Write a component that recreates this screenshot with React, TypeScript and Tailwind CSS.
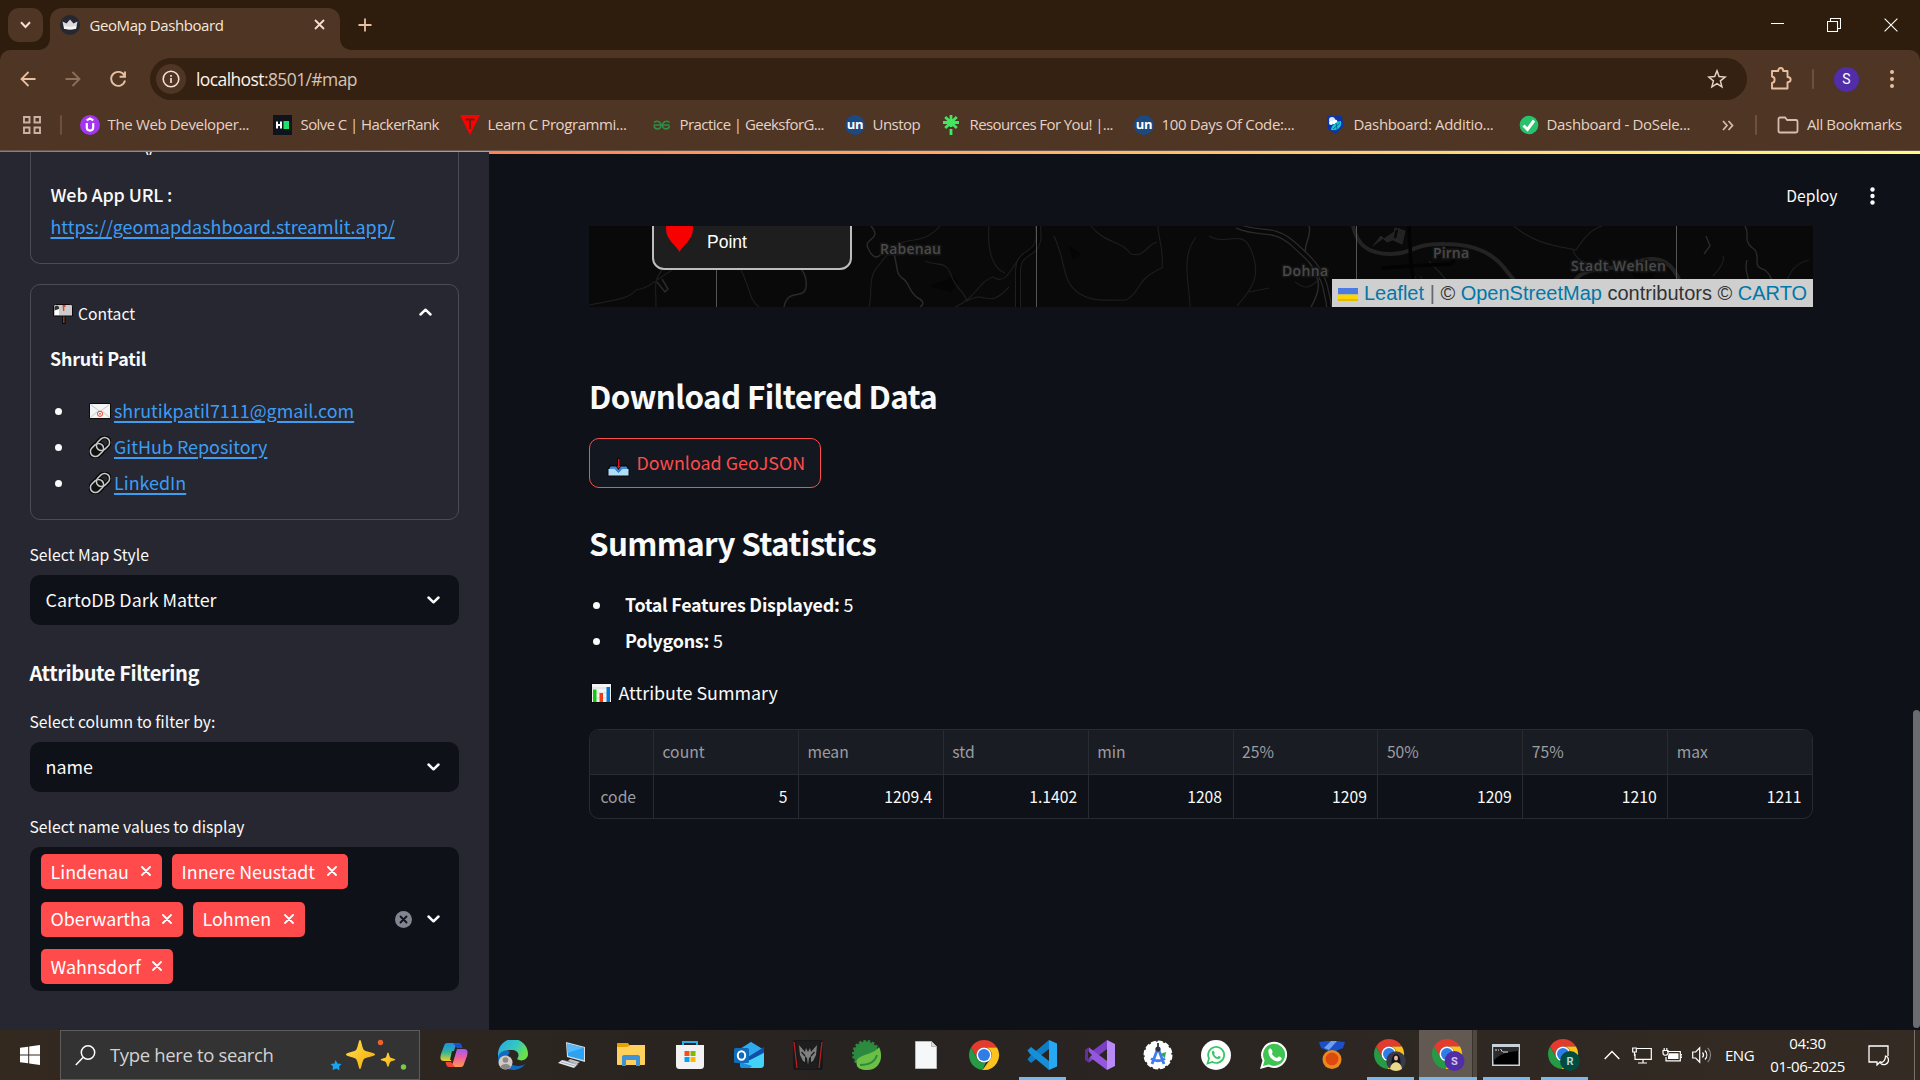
import type { ReactNode } from 'react';

const SEGOE = "font-['Open_Sans','Noto_Sans',sans-serif]";
const SOURCE = "font-['Noto_Sans_CJK_SC','Noto_Sans',sans-serif]";

/* ---------- browser chrome ---------- */

function Svg({ w, h, vb, children, className = '' }: { w: number; h: number; vb?: string; children: ReactNode; className?: string }) {
  return (
    <svg width={w} height={h} viewBox={vb ?? `0 0 ${w} ${h}`} fill="none" className={`block shrink-0 ${className}`}>
      {children}
    </svg>
  );
}

function TabStrip() {
  return (
    <div className="flex h-[50px] items-start bg-[#2e1c0d]">
      <div className="mt-2 ml-2 flex h-[34px] w-[35px] items-center justify-center rounded-[11px] bg-[#4e3524]">
        <Svg w={11} h={8}><path d="M1 1.3 5.5 6 10 1.3" stroke="#f4dfd0" strokeWidth="2" /></Svg>
      </div>
      <Svg w={12} h={12} className="-ml-[5px] mt-[38px]"><path d="M12 0v12H0C7 12 12 7 12 0Z" fill="#4e3524" /></Svg>
      <div className="mt-[8px] flex h-[42px] w-[290px] items-center rounded-t-[12px] bg-[#4e3524] pr-[15px] pl-[10px]">
        <Svg w={20} h={20} className="-mt-[8px]">
          <circle cx="10" cy="10" r="10" fill="#262730" />
          <path d="M2.5 6.4 6.5 8.6 10 4.6 13.5 8.6 17.5 6.4 16 13.8Q10 15 4 13.8Z" fill="#d9dadd" />
          <path d="M4 10.5Q10 13 16.5 10.5L16 13.8Q10 15 4 13.8Z" fill="#f4f4f5" />
        </Svg>
        <span className={`${SEGOE} -mt-[8px] ml-[9.5px] text-[15px] tracking-[-0.42px] whitespace-nowrap text-[#f7e6da]`}>GeoMap Dashboard</span>
        <Svg w={11} h={11} className="-mt-[9px] ml-auto"><path d="m1 1 9 9M10 1l-9 9" stroke="#f4dfd0" strokeWidth="1.8" /></Svg>
      </div>
      <Svg w={12} h={12} className="mt-[38px]"><path d="M0 0v12h12C5 12 0 7 0 0Z" fill="#4e3524" /></Svg>
      <Svg w={14} h={14} className="mt-[18px] ml-[6px]"><path d="M7 .5v13M.5 7h13" stroke="#e9bfa2" strokeWidth="1.8" /></Svg>
      <div className="mt-[18px] ml-auto flex items-center pr-[22px]">
        <Svg w={13} h={14}><path d="M0 5.500h13" stroke="#fff" /></Svg>
        <Svg w={14} h={14} className="ml-[43px]"><path d="M.5 3.500h10v10H.5zM3.500 3.500v-3h10v10h-3" stroke="#fff" strokeWidth="1.1" /></Svg>
        <Svg w={14} h={14} className="ml-[43px]"><path d="m.6.6 12.800 12.800M13.400.6.6 13.400" stroke="#fff" strokeWidth="1.1" /></Svg>
      </div>
    </div>
  );
}

function Toolbar() {
  return (
    <div className="h-[50px] bg-[#2e1c0d]">
      <div className="flex h-[50px] items-center rounded-t-[10px] bg-[#4e3524] pt-[8px]">
        <Svg w={16} h={16} className="ml-[19.5px]"><path d="M15.5 8H1.5M8.5 1 1.5 8l7 7" stroke="#e9bfa2" strokeWidth="1.8" /></Svg>
        <Svg w={16} h={16} className="ml-[29px]"><path d="M.5 8h14M7.5 1l7 7-7 7" stroke="#8f705c" strokeWidth="1.8" /></Svg>
        <Svg w={18} h={18} className="ml-[28px]"><path d="M15.4 5.6A7 7 0 1 0 16 10.5M16 1.5v5.3h-5.4" stroke="#e9bfa2" strokeWidth="1.9" /></Svg>
        <div className="ml-[23.5px] flex h-[42px] w-[1597px] items-center rounded-full bg-[#342111] pr-[20px] pl-[6px]">
          <div className="flex h-[30px] w-[30px] items-center justify-center rounded-full bg-[#4e3524]">
            <Svg w={18} h={18}><circle cx="9" cy="9" r="7.8" stroke="#f4dfd0" strokeWidth="1.6" /><path d="M9 8v5M9 5v1.7" stroke="#f4dfd0" strokeWidth="1.7" /></Svg>
          </div>
          <span className={`${SEGOE} ml-[10px] text-[17.500px] tracking-[-0.6px] whitespace-nowrap text-[#d9c3b4]`}>
            <span className="text-[#fff3ea]">localhost</span>:8501/#map
          </span>
          <Svg w={20} h={20} className="ml-auto"><path d="m10 1.800 2.100 5.700 6 .5-4.700 3.900 1.500 6L10 14.600l-5.100 3.300 1.500-6L1.700 8l6-.5Z" stroke="#e6d2c4" strokeWidth="1.500" /></Svg>
        </div>
        <Svg w={22} h={25} className="ml-[23px] -mt-[1px]">
          <path d="M2 5h6.200c0-4 5-4 5 0H17.500v6c4.200 0 4.200 5.200 0 5.200V22.500H2v-5.500c3.500-.5 3.500-6 0-6.500Z" stroke="#e9bfa2" strokeWidth="1.900" strokeLinejoin="round" />
        </Svg>
        <div className="ml-[20px] h-[20px] w-[2px] rounded bg-[#70503b]" />
        <div className="ml-[20px] flex h-[25px] w-[25px] items-center justify-center rounded-full bg-[#512da8] font-[Roboto,sans-serif] text-[14px] leading-none text-white">S</div>
        <Svg w={4} h={20} className="ml-[31px]"><g fill="#e9bfa2"><circle cx="2" cy="3" r="2" /><circle cx="2" cy="10" r="2" /><circle cx="2" cy="17" r="2" /></g></Svg>
      </div>
    </div>
  );
}

function UnIcon() {
  return <div className="flex h-[20px] w-[20px] items-center justify-center rounded-full bg-[#1c4980] pb-[2px] font-['Open_Sans',sans-serif] text-[13px] leading-none font-bold tracking-tight text-white">un</div>;
}

const bookmarks: { label: string; box: string; icon: ReactNode }[] = [
  {
    label: 'The Web Developer...', box: 'w-[193px] tracking-[-0.35px]',
    icon: <Svg w={20} h={20}><circle cx="10" cy="10" r="10" fill="#a435f0" /><path d="M6.600 5.400 10 3.500l3.400 1.900M6.800 8v4.600c0 4 6.400 4 6.400 0V8" stroke="#fff" strokeWidth="2.200" /></Svg>,
  },
  {
    label: 'Solve C | HackerRank', box: 'w-[187px] tracking-[-0.58px]',
    icon: <Svg w={20} h={20}><path fill="#0e141e" d="M0 0h19v20H0z" /><path d="M4 6.500v7M8 6.500v7M4 10h4" stroke="#fff" strokeWidth="2" /><path fill="#1ee36b" d="M10.500 6h5.500v8h-5.500z" /></Svg>,
  },
  {
    label: 'Learn C Programmi...', box: 'w-[192px] tracking-[-0.42px]',
    icon: <Svg w={20} h={20}><path d="M0 0h20L10 20Z" fill="#fe0000" /><path d="M5.500 4.500h9M10 4.500V14" stroke="#6b2013" strokeWidth="2" /></Svg>,
  },
  {
    label: 'Practice | GeeksforG...', box: 'w-[193px] tracking-[-0.55px]',
    icon: <Svg w={20} h={20}><path d="M1.500 10h16M2 7.500c4-3 7 0 7 2.500 0 5-6 5-7 1M17.500 7.500c-3.500-3-7 0-7 2.500 0 5 6 5 7 1" stroke="#2f8d46" strokeWidth="1.600" /></Svg>,
  },
  { label: 'Unstop', box: 'w-[97px] tracking-[-0.55px]', icon: <UnIcon /> },
  {
    label: 'Resources For You! |...', box: 'w-[192px] tracking-[-0.6px]',
    icon: <Svg w={20} h={20}><path d="M9 0v12M1 7.500h16M3.200 2l11.600 11M14.800 2 3.200 13M9 14v6" stroke="#43e660" strokeWidth="2.800" /></Svg>,
  },
  { label: '100 Days Of Code:...', box: 'w-[192px] tracking-[-0.35px]', icon: <UnIcon /> },
  {
    label: 'Dashboard: Additio...', box: 'w-[193px] tracking-[-0.33px]',
    icon: <Svg w={20} h={20}><path d="M1 1h15l1.500 10L9.500 19 2 14Z" fill="#0b35a5" /><circle cx="6" cy="5" r="3" fill="#dbe8ff" /><circle cx="9" cy="7" r="2.500" fill="#fff" /><circle cx="5" cy="8" r="2" fill="#fff" /><path d="M5 15c0-5 6-9 10-9 1 6-3 10-10 9Z" fill="#19c8c8" /><path d="m7 14 7-6M10 8l1 6" stroke="#0b5fb0" /></Svg>,
  },
  {
    label: 'Dashboard - DoSele...', box: 'w-[193px] tracking-[-0.33px]',
    icon: <Svg w={20} h={20}><circle cx="10" cy="10" r="9.300" fill="#27c26c" /><path d="m4.500 10.500 4 4L15 5.500" stroke="#fff" strokeWidth="3" /></Svg>,
  },
];

function BookmarksBar() {
  return (
    <div className={`${SEGOE} flex h-[50px] items-center bg-[#4e3524] text-[15px] text-[#e6d2c4]`}>
      <Svg w={18} h={18} className="ml-[23px]"><path d="M1 1h5.500v5.500H1zM11.500 1H17v5.500h-5.500zM1 11.500h5.500V17H1zM11.500 11.500H17V17h-5.500z" stroke="#c9b3a4" strokeWidth="1.900" /></Svg>
      <div className="ml-[19px] h-[20px] w-[2px] rounded bg-[#70503b]" />
      <div className="ml-[18px] flex w-[1632px] shrink-0">
        {bookmarks.map((b) => (
          <div key={b.label} className={`flex shrink-0 items-center gap-[7.500px] whitespace-nowrap ${b.box}`}>
            {b.icon}
            <span className="-mt-[2px]">{b.label}</span>
          </div>
        ))}
      </div>
      <Svg w={12} h={11} className="ml-[10px]"><path d="m1 1 4 4.500L1 10M6.500 1l4 4.500-4 4.500" stroke="#d5bfb0" strokeWidth="1.700" /></Svg>
      <div className="ml-[21px] h-[20px] w-[2px] rounded bg-[#70503b]" />
      <Svg w={22} h={18} className="-mt-[1px] ml-[20px]"><path d="M1.500 3.200c0-1 .5-1.700 1.500-1.700h5l2.200 2.500H19c.8 0 1.500.6 1.500 1.500V15c0 .9-.7 1.500-1.500 1.500H3c-.9 0-1.500-.6-1.500-1.500Z" stroke="#d5bfb0" strokeWidth="1.800" /></Svg>
      <span className="-mt-[2px] ml-[8px] tracking-[-0.4px] whitespace-nowrap">All Bookmarks</span>
    </div>
  );
}

/* ---------- sidebar ---------- */

function Chevron({ up = false }: { up?: boolean }) {
  return <Svg w={13} h={8} className={up ? 'rotate-180' : ''}><path d="M1.500 1.500 6.500 6.300l5-4.800" stroke="#fafafa" strokeWidth="2.500" strokeLinecap="round" strokeLinejoin="round" /></Svg>;
}

function Mailbox() {
  return (
    <Svg w={20} h={20}>
      <path d="M9 10h3.600v10H9z" fill="#0a0a0a" /><path d="M10 11h1.600v8H10z" fill="#7a3f17" />
      <path d="M2.500.5h15c1.500 0 2 .8 2 2v9.500H.5V3C.5 1.500 1.200.5 2.500.5Z" fill="#ccc" stroke="#0a0a0a" />
      <path d="M1.500 3.500c0-2.500 4.500-2.500 4.500 0V11H1.500Z" fill="#333" /><path d="M1.500 6.500 6 5v6H1.500Z" fill="#fff" />
      <path d="M9.500 1h3v2h-1.200v4H10Z" fill="#e8402a" />
    </Svg>
  );
}

function Envelope() {
  return (
    <Svg w={22} h={16}>
      <path d="M.5.5h21v15H.5z" fill="#f4f4f4" stroke="#0a0a0a" />
      <path d="m1.500 1.500 9.500 7 9.500-7M1.500 14.500l7-6M20.500 14.500l-7-6" stroke="#bbb" strokeWidth=".8" />
      <circle cx="11" cy="10.800" r="2.600" stroke="#e8402a" strokeWidth="1" /><circle cx="11" cy="10.800" r=".9" fill="#e8402a" />
    </Svg>
  );
}

function ChainLink() {
  return (
    <Svg w={22} h={22}>
      <g transform="rotate(-45 11 11)">
        <rect x="-.5" y="5.800" width="14.500" height="10.400" rx="5.200" stroke="#0a0a0a" strokeWidth="4" />
        <rect x="8" y="5.800" width="14.500" height="10.400" rx="5.200" stroke="#0a0a0a" strokeWidth="4" />
        <rect x="-.5" y="6" width="14.500" height="10" rx="5" fill="#111" stroke="#c9c9c9" strokeWidth="1.500" />
        <rect x="8" y="6" width="14.500" height="10" rx="5" stroke="#c9c9c9" strokeWidth="1.500" />
      </g>
    </Svg>
  );
}

const contacts = [
  { text: 'shrutikpatil7111@gmail.com', icon: <Envelope /> },
  { text: 'GitHub Repository', icon: <ChainLink /> },
  { text: 'LinkedIn', icon: <ChainLink /> },
];

function Select({ value }: { value: string }) {
  return (
    <div className="flex h-[50px] items-center justify-between rounded-[10px] bg-[#0e1117] pr-[19.500px] pl-[15.500px] text-[17.900px] leading-none">
      <span>{value}</span>
      <Chevron />
    </div>
  );
}

function Label({ children }: { children: ReactNode }) {
  return <div className="mb-[8px] -ml-[0.500px] h-[24px] text-[15.700px] leading-[24px]">{children}</div>;
}

function Tag({ label, box }: { label: string; box: string }) {
  return (
    <div className={`flex h-[35px] items-center justify-between rounded-[5px] bg-[#ff4b4b] pr-[11px] pl-[9.500px] text-[17.900px] leading-none text-white ${box}`}>
      <span className="whitespace-nowrap">{label}</span>
      <Svg w={10} h={10} className="-mt-[1px]"><path d="m1 1 8 8M9 1 1 9" stroke="#fff" strokeWidth="1.800" strokeLinecap="round" /></Svg>
    </div>
  );
}

function Sidebar() {
  return (
    <aside className={`${SOURCE} h-[878px] w-[489px] shrink-0 overflow-hidden bg-[#262730] px-[30px] text-[17.900px] text-[#fafafa]`}>
      <div className="h-[112px] rounded-b-[10px] border border-t-0 border-[#4a4b54] pl-[19px]">
        <div className="flex h-[3px] items-end overflow-hidden pl-[94px] leading-[10px]"><span>y</span></div>
        <div className="mt-[26px] ml-[0.500px] h-[26px] leading-[26px] font-medium tracking-[-0.120px]">Web App URL :</div>
        <a className="mt-[6px] ml-[0.500px] block h-[26px] w-fit leading-[26px] text-[#3d9df3] underline decoration-[1.500px] underline-offset-[3px]">https://geomapdashboard.streamlit.app/</a>
      </div>
      <div className="mt-[20px] h-[236px] rounded-[10px] border border-[#4a4b54] pr-[26px] pl-[19px]">
        <div className="mt-[17px] flex h-[24px] items-center">
          <div className="pl-[3px]"><Mailbox /></div>
          <span className="ml-[5px] text-[15.700px] leading-[24px]">Contact</span>
          <div className="-mt-[4px] ml-auto"><Chevron up /></div>
        </div>
        <div className="mt-[19px] h-[26px] leading-[26px] font-bold tracking-[-0.220px]">Shruti Patil</div>
        <ul className="mt-[22px]">
          {contacts.map((c) => (
            <li key={c.text} className="flex h-[36px] items-center">
              <span className="ml-[5px] h-[7px] w-[7px] rounded-full bg-[#fafafa]" />
              <span className="ml-[27px]">{c.icon}</span>
              <a className="-mt-[2px] ml-[3px] leading-[26px] whitespace-nowrap text-[#3d9df3] underline decoration-[1.500px] underline-offset-[3px]">{c.text}</a>
            </li>
          ))}
        </ul>
      </div>
      <div className="h-[23px]" />
      <Label>Select Map Style</Label>
      <Select value="CartoDB Dark Matter" />
      <h4 className="mt-[33px] -ml-[0.500px] h-[30px] text-[20.100px] leading-[30px] font-bold tracking-[-0.420px]">Attribute Filtering</h4>
      <div className="h-[22px]" />
      <Label>Select column to filter by:</Label>
      <Select value="name" />
      <div className="h-[23px]" />
      <Label>Select name values to display</Label>
      <div className="flex h-[144px] items-center rounded-[10px] bg-[#0e1117] pr-[19.500px] pl-[11px]">
        <div className="flex flex-col gap-[12.500px]">
          <div className="flex gap-[10px]"><Tag label="Lindenau" box="w-[121px]" /><Tag label="Innere Neustadt" box="w-[176px]" /></div>
          <div className="flex gap-[10px]"><Tag label="Oberwartha" box="w-[142px]" /><Tag label="Lohmen" box="w-[112px]" /></div>
          <div className="flex"><Tag label="Wahnsdorf" box="w-[132px]" /></div>
        </div>
        <Svg w={17} h={17} className="ml-auto"><circle cx="8.500" cy="8.500" r="8.500" fill="#83848f" /><path d="m5.500 5.500 6 6m0-6-6 6" stroke="#0e1117" strokeWidth="1.800" strokeLinecap="round" /></Svg>
        <div className="ml-[15px]"><Chevron /></div>
      </div>
    </aside>
  );
}

/* ---------- main ---------- */

function MapStrip() {
  return (
    <div className="relative h-[81px] w-[1224px] overflow-hidden bg-[#090909] font-['Liberation_Sans',Arial,sans-serif]">
      <Svg w={1224} h={81}>
        <path d="M340 60c10-5 18-4 24-10l6 6-8 10ZM480 20l12 8-8 6ZM890 70l12-2 8 8-14 3ZM1040 44l16 4 12-4-6 10-16-2Z" fill="#050505" />
        <g stroke="#1d1d1d" strokeWidth="1.200">
          <path d="M0 79c25-5 40-6 47-15 12-1 20-10 36-20M67 81c0-20-3-26 6-37M152 44c10 20 8 30 18 37M280 81c4-16-2-30 10-42 12-16 20-24 35-25 16-2 22-10 26-14M336 35c12 6 20-2 26 14 6 16 12 14 16 26 20-12 20 10 42-14M400 0c-2 20 2 42 16 47M366 81c20-8 24-26 38-30 14 10 20-14 28-20M465 10c14 30 6 44 26 58 14 8 26 6 46 6 16-8 8-20 36-32 2-20-4-30-4-42M502 0c14 18 30 14 40 28 14 4 16-10 26-12M601 81c0-20-10-50 6-70M620 10c16 10 32-6 40 10 16 30 0 46-12 60M660 66l20-4M740 44c-20 20-22 20-34 12M925 0c20 18 44 20 62 24 8-12 14-20 26-24M984 24c4 14 20 14 26 18M1190 70c10-10 6-30 30-36M1124 50c8-8 12-16 10-20" />
          <path d="M870 81c-10-30-22-36-30-46M826 50V81M832 50l2 31" />
        </g>
        <path d="M73 53l6 10-3 3-8-10M195 81c4-20 20-6 22-20s-8-20-4-17M282 0c12 14-8 12-3 22 4 10 10 12 14 4M305 28c4 14 2 20 8 24 8 4 6 14 16 20 8 4 4 8 2 9M720 0c4 12-10 20 0 36s14 24 2 45" stroke="#2a2a2a" strokeWidth="1.500" />
        <path d="M429 81V60c0-20-2-26 12-34 10-6 9-16 8-26" stroke="#202020" strokeWidth="6" />
        <path d="M429 81V60c0-20-2-26 12-34 10-6 9-16 8-26" stroke="#060606" strokeWidth="4" />
        <path d="M648 0c24 10 34 0 54 16 18 16 28 24 34 44 2 10 4 16 4 21" stroke="#2b2b2b" strokeWidth="6" />
        <path d="M648 0c24 10 34 0 54 16 18 16 28 24 34 44 2 10 4 16 4 21" stroke="#080808" strokeWidth="3.500" />
        <path d="M764 0c4 18 14 28 38 28 24 0 20-11 54-10 32 0 50 10 64 30 14 16 18 28 44 30 24 0 10-24 34-32 14-6 40-2 56-12 20-4 30 4 38 24 4 10 2 16 2 23" stroke="#232323" strokeWidth="4" />
        <path d="m784 20 8-10 6 6 10-4 2-10M804 14l2-12 10 3-3 13Z" fill="#232323" stroke="#262626" />
        <path d="M820 0l2 40 40-2 6-8M822 40l4 22M822 40l-30 2" stroke="#030303" strokeWidth="3.500" />
        <path d="M1156 0c6 10-4 14 10 24 6 10-4 16 10 20 8 6 4 12 14 16l6 10 6 11M1117 10l4 10-6 8M1158 34c-4 12 4 18 2 30" stroke="#2a2a2a" strokeWidth="1.400" />
        <g stroke="#555"><path d="M127.500 0v81M447.500 0v81M767.500 0v81M1087.500 0v81" /></g>
        <g fill="#4a4a4a" stroke="#151515" strokeWidth="3" paintOrder="stroke" fontFamily="Open Sans, sans-serif" fontSize="14" fontWeight="600">
          <text x="291" y="28" textLength="61">Rabenau</text>
          <text x="693" y="50" textLength="46">Dohna</text>
          <text x="844" y="32" textLength="36">Pirna</text>
          <text x="982" y="45" textLength="95">Stadt Wehlen</text>
        </g>
      </Svg>
      <div className="absolute -top-[20px] left-[63px] flex h-[64px] w-[200px] rounded-[12px] border-2 border-[#bdbdbd] bg-[#1e1e1e]">
        <Svg w={27} h={40} className="mt-[5px] ml-[12px]"><path d="M13.500 39C11 33 0 27 0 16a13.500 16 0 0 1 27 0c0 11-11 17-13.500 23Z" fill="#f60000" /></Svg>
        <span className="mt-[22px] ml-[14px] text-[17.500px] leading-[24px] text-white">Point</span>
      </div>
      <div className="absolute right-0 bottom-0 flex h-[28px] w-[481px] items-center bg-[#cfcfcf] pl-[6px] text-[20px] leading-none whitespace-nowrap text-[#333]">
        <Svg w={20} h={13} className="mt-[2px]"><path fill="#4c7be1" d="M0 0h20v6.500H0z" /><path fill="#ffd500" d="M0 6.500h20V11H0z" /><path fill="#e0bc00" d="M0 11h20v2H0z" /></Svg>
        <span className="ml-[6px]">
          <span className="text-[#0078a8]">Leaflet</span> <span className="text-[#666]">|</span> © <span className="text-[#0078a8]">OpenStreetMap</span> contributors © <span className="text-[#0078a8]">CARTO</span>
        </span>
      </div>
    </div>
  );
}

const stats = [
  ['count', '5'], ['mean', '1209.4'], ['std', '1.1402'], ['min', '1208'],
  ['25%', '1209'], ['50%', '1209'], ['75%', '1210'], ['max', '1211'],
];

function StatsTable() {
  return (
    <div className="mt-[23px] flex h-[90px] w-[1224px] overflow-hidden rounded-[10px] border border-[#292b32] text-[15.700px] leading-none">
      <div className="w-[63px] shrink-0">
        <div className="h-[45px] border-b border-[#292b32] bg-[#1a1c24]" />
        <div className="flex h-[43px] items-center pl-[10.500px] text-[#9c9da1]">code</div>
      </div>
      {stats.map(([k, v]) => (
        <div key={k} className="flex-1 border-l border-[#292b32]">
          <div className="flex h-[45px] items-center border-b border-[#292b32] bg-[#1a1c24] pl-[8.500px] text-[#9c9da1]">{k}</div>
          <div className="flex h-[43px] items-center justify-end pr-[10.500px] text-[#fafafa]">{v}</div>
        </div>
      ))}
    </div>
  );
}

function Main() {
  return (
    <main className={`${SOURCE} relative h-[878px] flex-1 bg-[#0e1117] pl-[100px] text-[17.900px] text-[#fafafa]`}>
      <div className="flex h-[74px] items-center pt-[14px] pr-[45px]">
        <span className="ml-auto text-[15.700px] leading-none">Deploy</span>
        <Svg w={5} h={18} className="ml-[32.500px]"><g fill="#fafafa"><circle cx="2.500" cy="2.500" r="2.200" /><circle cx="2.500" cy="9" r="2.200" /><circle cx="2.500" cy="15.500" r="2.200" /></g></Svg>
      </div>
      <MapStrip />
      <h3 className="mt-[68px] h-[42px] text-[31.300px] leading-[42px] font-bold tracking-[-0.620px] whitespace-nowrap">Download Filtered Data</h3>
      <div className="mt-[21px] flex h-[50px] w-[232px] items-center rounded-[10px] border border-[#ff4b4b] bg-[#131720] pl-[17px] leading-none text-[#ff4b4b]">
        <Svg w={23} h={19} className="mt-[8px]">
          <path d="M3 7h17l2.500 5v6.500H.5V12Z" fill="#0a0a0a" /><path d="m3.500 8.500-2 4h20l-2-4Z" fill="#3b8ede" />
          <path d="M1.500 11h6l4 3.500 4-3.500h6v6.500h-20Z" fill="#b3dcf6" /><path d="M7.500 10h8l-4 5Z" fill="#3b8ede" />
          <path d="M10 0h3v7h2l-3.500 5L8 7h2Z" fill="#0a0a0a" /><path d="M11 1h1.400v7h1.200l-2 2.500L9.800 8H11Z" fill="#e81224" />
        </Svg>
        <span className="ml-[6.500px] whitespace-nowrap">Download GeoJSON</span>
      </div>
      <h3 className="mt-[34px] h-[42px] text-[31.300px] leading-[42px] font-bold tracking-[-0.640px] whitespace-nowrap">Summary Statistics</h3>
      <ul className="mt-[23px]">
        <li className="flex h-[36px] items-center"><span className="ml-[4px] h-[7px] w-[7px] rounded-full bg-[#fafafa]" /><span className="ml-[25px] leading-none"><b className="font-bold tracking-[-0.250px]">Total Features Displayed:</b> 5</span></li>
        <li className="flex h-[36px] items-center"><span className="ml-[4px] h-[7px] w-[7px] rounded-full bg-[#fafafa]" /><span className="ml-[25px] leading-none"><b className="font-bold tracking-[-0.250px]">Polygons:</b> 5</span></li>
      </ul>
      <div className="mt-[21px] flex h-[26px] items-center leading-none">
        <Svg w={21} h={20} className="ml-[2px]"><path fill="#0a0a0a" d="M0 0h21v20H0z" /><path fill="#f4f4f4" d="M1 1h19v18H1z" /><path d="M1 5h19M1 10h19M1 15h19" stroke="#ccc" strokeWidth=".7" /><path fill="#16c60c" d="M2 6.500h3.500V19H2z" /><path fill="#f03a17" d="M8.500 10H12v9H8.500z" /><path fill="#0078d7" d="M15.500 4H19v15h-3.500z" /></Svg>
        <span className="ml-[6.500px]">Attribute Summary</span>
      </div>
      <StatsTable />
      <div className="absolute top-[558px] right-0 h-[318px] w-[7px] rounded-full bg-[#6b6c70]" />
    </main>
  );
}

/* ---------- taskbar ---------- */

function Chrome({ badge }: { badge?: ReactNode }) {
  return (
    <Svg w={34} h={34} vb="-1 -1 34 34">
      <path d="M15 0a15 15 0 0 1 13 7.500H15a7.500 7.500 0 0 0-6.500 11L2 7.500A15 15 0 0 1 15 0Z" fill="#e33b2e" />
      <path d="M2 7.500 8.500 18.800A7.500 7.500 0 0 0 17 22.200L13.500 30A15 15 0 0 1 2 7.500Z" fill="#269a45" />
      <path d="M28 7.500A15 15 0 0 1 13.500 30l8-11.200A7.500 7.500 0 0 0 17 7.500Z" fill="#fcc31e" />
      <circle cx="15" cy="15" r="7.500" fill="#fff" /><circle cx="15" cy="15" r="6" fill="#2f7de9" />
      {badge}
    </Svg>
  );
}

const badgeText = { fontFamily: 'Roboto, sans-serif', fontSize: 11, fontWeight: 700, textAnchor: 'middle' as const };

const apps: { name: string; state?: 'open' | 'active'; wide?: boolean; icon: ReactNode }[] = [
  {
    name: 'copilot', wide: true, icon: (
      <Svg w={28} h={26}>
        <defs>
          <linearGradient id="cpa" x1="0" y1="0" x2="0" y2="1"><stop stopColor="#1f8df0" /><stop offset=".5" stopColor="#2cb59a" /><stop offset="1" stopColor="#f0cf20" /></linearGradient>
          <linearGradient id="cpb" x1="0" y1="0" x2="0" y2="1"><stop stopColor="#9a5cf0" /><stop offset=".5" stopColor="#f0609a" /><stop offset="1" stopColor="#ff9a4a" /></linearGradient>
        </defs>
        <path d="M7 1h12c-3 1-4 4-5 8l-3 10H4c-4 0-4-3-3-7L4 4c.5-2 1.500-3 3-3Z" fill="url(#cpa)" />
        <path d="M13 1h6c2 0 3 2 3.500 5H17Z" fill="#1a4fd0" />
        <path d="M21 25H9c3-1 4-4 5-8l3-10h7c4 0 4 3 3 7l-3 8c-.5 2-1.500 3-3 3Z" fill="url(#cpb)" />
        <path d="M15 25H9c-2 0-3-2-3.500-5H11Z" fill="#f2463a" /><path d="M12 9h4l-3 9h-3Z" fill="#252321" />
      </Svg>
    ),
  },
  {
    name: 'edge', wide: true, icon: (
      <Svg w={30} h={30}>
        <defs><linearGradient id="edg" x1="0" y1="0" x2="1" y2=".5"><stop stopColor="#2aa5e8" /><stop offset=".6" stopColor="#33c8c0" /><stop offset="1" stopColor="#6be04a" /></linearGradient></defs>
        <path d="M0 14A15 15 0 0 1 30 14c0 6-7 8-11 5 4-6-1-9-5-9C8 10 3 12 0 19Z" fill="url(#edg)" />
        <path d="M0 17c2-7 9-8 12-5-4 5-2 14 8 14 4 0 6-1 7.500-2.500C24 29 17 31 11 29.500 4 28 0 23 0 17Z" fill="#1469c0" />
        <circle cx="7.500" cy="22.500" r="7" fill="#cfccc8" /><circle cx="7.500" cy="20" r="2.800" fill="#8a8784" /><path d="M2.500 27c1-4 9-4 10 0-3 3-7 3-10 0Z" fill="#8a8784" />
      </Svg>
    ),
  },
  {
    name: 'pc', wide: true, icon: (
      <Svg w={28} h={26}><path d="M8 0 27 5v15L9 15Z" fill="#d7dde2" /><path d="m9 1.500 17 4.300v12.500L10 14Z" fill="#2ea2f2" /><path d="m9 1.500 17 4.300-16 5Z" fill="#57b8fa" /><path d="m12 17 10 3-3 2-9-3Z" fill="#bcc4ca" /><path d="m4 18 16 4-4 4L0 21Z" fill="#e2e6e9" /><path d="m3 20 14 4M6 18.500l13 4" stroke="#8f979d" strokeWidth=".7" /></Svg>
    ),
  },
  {
    name: 'explorer', wide: true, icon: (
      <Svg w={28} h={24}><path d="M0 1c0-.6.400-1 1-1h10l2 3v5H0Z" fill="#e8a000" /><path d="M0 4h10l3-2h15v19c0 .6-.4 1-1 1H1c-.6 0-1-.4-1-1Z" fill="#ffd05c" /><path d="M5 23V14c0-1 .6-2 2-2h14c1.400 0 2 1 2 2v9h-4v-6H9v6Z" fill="#3d93d8" /></Svg>
    ),
  },
  {
    name: 'store', wide: true, icon: (
      <Svg w={30} h={30}><path d="M8 6V2h14v4" stroke="#28aeea" strokeWidth="2" /><path d="M1 5h28v20c0 3-1 4-4 4H5c-3 0-4-1-4-4Z" fill="#f2f2f2" /><path fill="#f25022" d="M9.500 11h5v5h-5z" /><path fill="#7fba00" d="M15.500 11h5v5h-5z" /><path fill="#00a4ef" d="M9.500 17h5v5h-5z" /><path fill="#ffb900" d="M15.500 17h5v5h-5z" /></Svg>
    ),
  },
  {
    name: 'outlook', wide: true, icon: (
      <Svg w={30} h={28}><path d="M4 9 17 1l13 8v14L6 22Z" fill="#1a7fd6" /><path d="m8 7 9-6 13 8-14 8Z" fill="#31a9ee" /><path d="m14 16 16-10v5L16 20Z" fill="#0f4fa8" /><path d="M6 24 30 12v11c0 3-1 4-4 4H9c-2 0-3-1-3-3Z" fill="#43d2f8" /><path d="M6 21l12 4-2 2H9c-2 0-3-1-3-3Z" fill="#1e8fe0" /><rect x="0" y="7" width="15" height="15" rx="1.500" fill="#0f6cbd" /><ellipse cx="7.500" cy="14.500" rx="3.700" ry="4.200" stroke="#fff" strokeWidth="2" /></Svg>
    ),
  },
  {
    name: 'predator', wide: true, icon: (
      <Svg w={30} h={30}>
        <rect width="30" height="30" rx="2" fill="#181818" /><path d="M1 2 4 28M29 2l-3 26" stroke="#c81f1f" strokeWidth="1.200" /><path d="M3 1h24l-3 28H6Z" fill="#1d1d1d" />
        <path d="m6 5 6 7 1-4 2 4 2-4 1 4 6-7-1 10-3 6-2 1v-6l-2 2-1 7-1-7-2-2v6l-2-1-3-6Z" fill="#808080" />
        <path d="m8.500 12 3.500 4M21.500 12 18 16" stroke="#1d1d1d" strokeWidth="1.300" />
      </Svg>
    ),
  },
  {
    name: 'spring', wide: true, icon: (
      <Svg w={30} h={30}><circle cx="14" cy="14" r="12.500" fill="#2b8a3e" stroke="#2b8a3e" strokeWidth="3" strokeDasharray="2.500 1.800" /><path d="M27 7C32 17 28 30 15 30 9 30 6 28 5 26 1 13 20 17 27 7Z" fill="#6cbf45" /><path d="M8 25c8 0 15-3 17-10" stroke="#2b8a3e" strokeWidth="1.800" /></Svg>
    ),
  },
  {
    name: 'document', wide: true, icon: <Svg w={22} h={28}><path d="M.5.5h16l5 5v22H.5Z" fill="#f6f7f8" stroke="#b9b9b9" /><path d="M16.500.5v5h5" fill="#d8d8d8" stroke="#b9b9b9" /></Svg>,
  },
  { name: 'chrome', icon: <div className="pt-[2px] pl-[2px]"><Chrome /></div> },
  {
    name: 'vscode', state: 'open', icon: <Svg w={30} h={30}><path d="M22 0v9L4 23 .5 19.500 3 16Z" fill="#0f7cc4" /><path d="M22 30v-9L4 7 .5 10.500 3 14Z" fill="#1590d8" /><path d="m22 0 8 3.500v23L22 30Z" fill="#26a8f2" /></Svg>,
  },
  {
    name: 'visual studio', icon: <Svg w={30} h={30}><path d="M22 0v9L4 22.500.5 20V16Z" fill="#7a3fc4" /><path d="M22 30v-9L4 7.500.5 10v4Z" fill="#9557dd" /><path d="m22 0 8 4v22l-8 4Z" fill="#b98af5" /><path d="M0 10 4 7.500v15L0 20Z" fill="#62309b" /><path d="m3 11 4 4-4 4Z" fill="#2b2522" /></Svg>,
  },
  {
    name: 'android studio', icon: <Svg w={30} h={30}><circle cx="15" cy="15" r="13.500" fill="#fff" stroke="#fff" strokeWidth="2" strokeDasharray="5 2" /><path d="m17 14 6-2-1 6Z" fill="#33a852" /><path d="M15 8 9 24M15 8l6 16M8 18.500c4 3 10 3 14 0" stroke="#3f7df0" strokeWidth="2.800" /><circle cx="15" cy="9" r="2.600" fill="#2c3440" /><path d="M15 3v5" stroke="#2c3440" strokeWidth="1.800" /></Svg>,
  },
  {
    name: 'whatsapp beta', icon: <Svg w={30} h={30}><circle cx="15" cy="15" r="15" fill="#fff" /><path d="m6.500 23.500 1.500-5a8 8 0 1 1 3.400 3.500Z" stroke="#34c764" strokeWidth="1.700" /><path d="M11 11.500c1-1.500 2-.8 2.500 1s-.8 1.500 0 2.500 1.500 1.700 2.500 2 1-1.200 2-1 2 .8 1.500 2c-3 3-9-1-8.500-6.500Z" fill="#34c764" /></Svg>,
  },
  {
    name: 'whatsapp', icon: <Svg w={28} h={28}><path d="m1.500 26.500 2-7A12 12 0 1 1 8.600 24.500Z" fill="#3fc351" stroke="#fff" strokeWidth="2" /><path d="M8.500 9c1.500-2.500 3-1.500 3.800 1s-1 2 0 3.500 2.500 2.800 4 3.300 1.500-1.800 3-1.300 3 1.200 2 3.200c-5 5-14-2-12.800-9.700Z" fill="#fff" /></Svg>,
  },
  {
    name: 'medal', icon: <Svg w={28} h={30}><path d="M1 2c8-1.500 18-1.500 26 0l-2 6-7 3h-8L3 8Z" fill="#1c50c8" /><path d="M6 8 13 1h6l-8 9Z" fill="#6ea0f0" /><circle cx="14" cy="19.500" r="9.500" fill="#f0871e" /><circle cx="14" cy="19" r="6.500" fill="#dd4a10" /></Svg>,
  },
  {
    name: 'chrome profile 1', state: 'open', icon: (
      <Chrome badge={<><circle cx="22" cy="22" r="9.800" fill="#3a3a4a" /><path d="M17.500 27c-1.500-16 10.500-16 9 0Z" fill="#15131a" /><ellipse cx="22" cy="19" rx="2" ry="2.600" fill="#e8b898" /><path d="M16 30c1-9 11-9 12 0-4 2.500-8 2.500-12 0Z" fill="#e9d78a" /></>} />
    ),
  },
  { name: 'chrome profile 2', state: 'active', icon: <Chrome badge={<><circle cx="22.500" cy="22" r="10" fill="#512da8" /><text x="22.500" y="26" fill="#cfc6ea" {...badgeText}>S</text></>} /> },
  {
    name: 'terminal', state: 'open', icon: <Svg w={28} h={22}><path fill="#c9d2da" d="M0 0h28v22H0z" /><path fill="#000" d="M1.500 3h25v17.500h-25z" /><path d="M1.500 3h25v4C12 8 5 12 1.500 17Z" fill="#2c2c2c" /><path d="M3 6h2M6 6h1M8.500 5l2 3M11 8h5" stroke="#ddd" /></Svg>,
  },
  { name: 'chrome profile 3', state: 'open', icon: <Chrome badge={<><circle cx="22" cy="22" r="10" fill="#004d40" /><text x="22" y="26" fill="#bcd3cf" {...badgeText}>R</text></>} /> },
];

function Taskbar() {
  return (
    <footer className={`${SEGOE} flex h-[50px] bg-linear-to-r from-[#33291f] via-[#272321] via-45% to-[#342b23]`}>
      <div className="flex w-[60px] shrink-0 items-center justify-center">
        <Svg w={20} h={20}><path d="m0 2.800 8.200-1.100v7.800H0ZM9.200 1.500 20 0v9.500H9.200ZM0 10.500h8.200v7.800L0 17.200ZM9.200 10.500H20V20L9.200 18.500Z" fill="#fff" /></Svg>
      </div>
      <div className="flex w-[360px] shrink-0 items-center border border-[#5d5c5b] bg-[#333] pl-[14px]">
        <Svg w={21} h={21}><circle cx="13" cy="7.500" r="6.700" stroke="#fff" strokeWidth="1.500" /><path d="M8 12.500.8 20" stroke="#fff" strokeWidth="1.500" /></Svg>
        <span className="ml-[14px] text-[18.500px] tracking-[-0.350px] whitespace-nowrap text-[#d2d2d2]">Type here to search</span>
        <Svg w={78} h={32} className="mr-[11px] ml-auto">
          <defs><linearGradient id="star" x1="0" y1="0" x2="1" y2="1"><stop stopColor="#ffe14d" /><stop offset="1" stopColor="#f5a80a" /></linearGradient></defs>
          <path d="M30 1c1.500 0 2 8 4 10s11 2.500 11 4.500-9 2.500-11 4.500-2.500 10-4 10-2-8-4-10-10-2.500-10-4.500 8-2.500 10-4.500 2.500-10 4-10Z" fill="url(#star)" />
          <path d="M58 13.500c1 0 1.200 4 2.300 5s5 1.200 5 2.200-4 1.200-5 2.200-1.300 4.800-2.300 4.800-1.200-3.800-2.300-4.800-4.900-1.200-4.900-2.200 4-1.200 5-2.200 1.200-5 2.200-5Z" fill="url(#star)" />
          <path d="m5.500 21 2 3.500 4 .5-2.500 2.500.5 4-3-2L2.500 31 3 27.500.5 25l4-.5Z" fill="#18a5f0" />
          <circle cx="50.500" cy="3.500" r="2.700" fill="#f0602a" /><circle cx="73.500" cy="28" r="2.700" fill="#7cc744" />
        </Svg>
      </div>
      <div className="ml-[4px] flex w-[1170px] shrink-0">
        {apps.map((a) => (
          <div key={a.name} className={`relative flex shrink-0 items-center justify-center ${a.wide ? 'w-[59px]' : 'w-[58px]'} ${a.state === 'active' ? 'bg-[#625953]' : ''}`}>
            {a.icon}
            {a.state === 'open' && <div className="absolute bottom-0 left-[6px] h-[3px] w-[47px] bg-[#76b9ed]" />}
            {a.state === 'active' && <div className="absolute top-0 right-0 h-[50px] w-[5px] border-l border-[#3a322c] bg-[#50473f]" />}
            {a.state === 'active' && <div className="absolute bottom-0 left-0 h-[3px] w-[58px] bg-[#76b9ed]" />}
          </div>
        ))}
      </div>
      <div className="flex flex-1 items-center text-white">
        <Svg w={16} h={10} className="ml-[10px]"><path d="m.7 9 7.300-7.500L15.300 9" stroke="#fff" strokeWidth="1.400" /></Svg>
        <Svg w={20} h={17} className="ml-[12px]"><path d="M5 1.500h14.300v10.800H3V7M11 12.500V16M6 16h9" stroke="#fff" strokeWidth="1.200" /><path d="M.7 1h3.600v4H.7zM2.500 5v4" stroke="#fff" strokeWidth="1.200" /></Svg>
        <Svg w={20} h={14} className="ml-[10px]"><path d="M5 3.500h13.300v9.300H4V9" stroke="#fff" strokeWidth="1.200" /><path d="M7 5.300h9.500V11H6V8Z" fill="#fff" /><path d="M18.500 6.500h1.500v3h-1.500M1 2.500h5V5c0 3-5 3-5 0ZM2.200 0v2.500M4.800 0v2.500" stroke="#fff" strokeWidth="1.200" /></Svg>
        <Svg w={20} h={18} className="ml-[10px]"><path d="M.7 6h3l4-4.200v14.400L3.700 12h-3Z" stroke="#fff" strokeWidth="1.200" /><path d="M10.500 6.500c1.300 1.500 1.300 3.500 0 5M13 4.500c2.400 2.600 2.400 6.400 0 9" stroke="#fff" strokeWidth="1.200" /><path d="M15.700 2c3.800 4 3.800 10 0 14" stroke="#8a847e" strokeWidth="1.200" /></Svg>
        <span className="ml-[13px] text-[15px] tracking-[-0.500px]">ENG</span>
        <div className="ml-[15px] flex w-[77px] flex-col items-center text-[15px] leading-[23px] tracking-[-0.350px] whitespace-nowrap">
          <span>04:30</span>
          <span>01-06-2025</span>
        </div>
        <Svg w={22} h={21} className="ml-[22px]"><path d="M13.500 17H12l-3 3v-3H1V1h19v10" stroke="#fff" strokeWidth="1.300" /><path d="M17.500 11c0 4-1.500 6-5 7 2.500 3 8 1.500 8-3 0-2-1-3.500-3-4Z" stroke="#fff" strokeWidth="1.200" /></Svg>
        <div className="mr-[5px] ml-auto h-[50px] w-[1px] bg-[#77716b]" />
      </div>
    </footer>
  );
}

export default function App() {
  return (
    <div className="flex h-[1080px] w-[1920px] flex-col overflow-hidden bg-[#0e1117]">
      <TabStrip />
      <Toolbar />
      <BookmarksBar />
      <div className="h-px bg-[#6a584c]" />
      <div className="relative h-px bg-linear-to-r from-[#ff4b4b] to-[#fffd80]">
        <div className="absolute top-0 left-0 z-10 h-[3px] w-full bg-linear-to-r from-[#ff4b4b] to-[#fffd80] [clip-path:inset(0_0_0_489px)]" />
      </div>
      <div className="flex">
        <Sidebar />
        <Main />
      </div>
      <Taskbar />
    </div>
  );
}
